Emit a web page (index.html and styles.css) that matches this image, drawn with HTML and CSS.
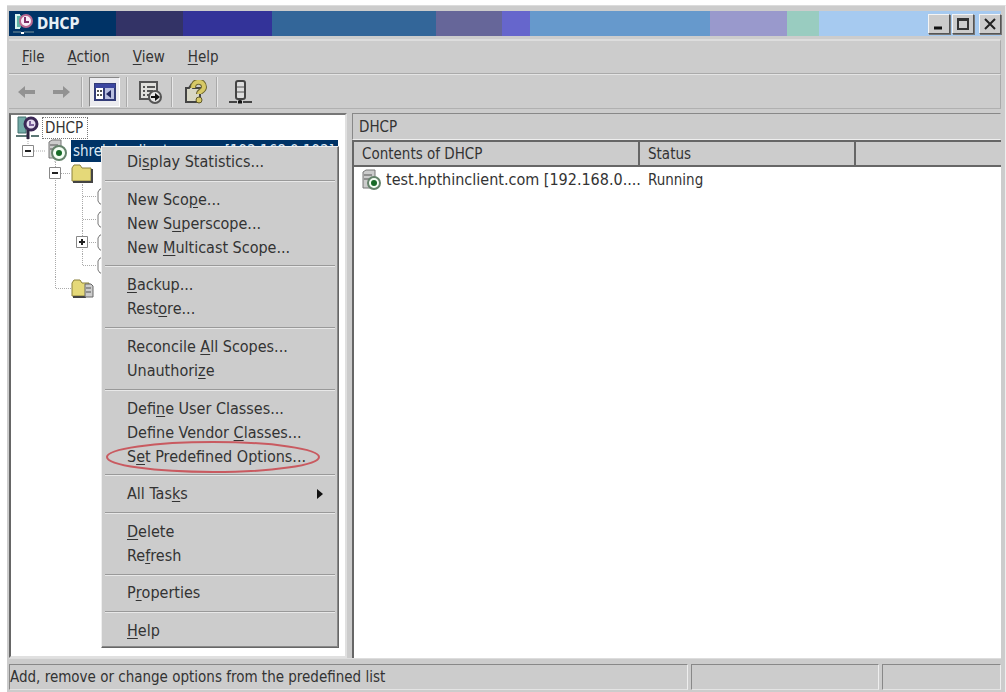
FILE: index.html
```html
<!DOCTYPE html>
<html lang="en">
<head>
<meta charset="utf-8">
<title>DHCP</title>
<link rel="stylesheet" href="styles.css">
</head>
<body>
<div class="window">
  <header class="titlebar">
    <svg class="title-icon" width="24" height="24" viewBox="0 0 24 24" aria-hidden="true"><path d="M4 3h6v13H4z" fill="#5fb5a8"/><path d="M4 3h5M4 16h5M5 3v13" stroke="#d8f4ee" stroke-width="2"/><circle cx="15" cy="9" r="6" fill="#f8eef8" stroke="#b86890" stroke-width="2"/><path d="M14 5v5h4" fill="none" stroke="#803068" stroke-width="2"/><path d="M2 20h8M13 20h10" stroke="#79939a" stroke-width="1"/><path d="M10 21h3" stroke="#fff" stroke-width="2"/></svg>
    <h1 class="title">DHCP</h1>
    <div class="controls">
      <button class="control" aria-label="Minimize"><svg width="14" height="14" viewBox="0 0 14 14"><path d="M2 11h8" stroke="#111" stroke-width="3"/></svg></button>
      <button class="control" aria-label="Maximize"><svg width="14" height="14" viewBox="0 0 14 14"><path d="M2 2h10v10H2zM1 3h12" fill="none" stroke="#333" stroke-width="2"/></svg></button>
      <button class="control close" aria-label="Close"><svg width="14" height="14" viewBox="0 0 14 14"><path d="M2 2l10 10M12 2L2 12" stroke="#222" stroke-width="2"/></svg></button>
    </div>
  </header>
  <nav class="menubar" aria-label="Main menu">
    <button class="menu-title"><u>F</u>ile</button>
    <button class="menu-title"><u>A</u>ction</button>
    <button class="menu-title"><u>V</u>iew</button>
    <button class="menu-title"><u>H</u>elp</button>
  </nav>
  <div class="toolbar" role="toolbar" aria-label="Tools">
    <button class="tool nav" aria-label="Back"><svg width="20" height="20" viewBox="0 0 20 20"><path d="M1 10l7-6v4h10v4H8v4z" fill="#929292"/></svg></button>
    <button class="tool nav" aria-label="Forward"><svg width="20" height="20" viewBox="0 0 20 20"><path d="M19 10l-7-6v4H2v4h10v4z" fill="#929292"/></svg></button>
    <span class="divider"></span>
    <button class="tool pressed" aria-label="Show console tree"><svg width="22" height="20" viewBox="0 0 22 20"><path d="M1 2h20v16H1z" fill="#fff" stroke="#333c78" stroke-width="2"/><path d="M1 4h20" stroke="#3b46a0" stroke-width="4"/><path d="M11 6h9v11h-9z" fill="#b9bfe0"/><path d="M10 6v12" stroke="#333c78" stroke-width="2"/><path d="M3 9h2m1 0h2M3 13h2m1 0h2" stroke="#555" stroke-width="2"/><path d="M17 8v8l-5-4z" fill="#202660"/></svg></button>
    <span class="divider"></span>
    <button class="tool" aria-label="Export list"><svg width="24" height="24" viewBox="0 0 24 24"><path d="M2 2h17v17H2z" fill="#e0e0dc" stroke="#555" stroke-width="2"/><path d="M5 7h2m2 0h8M5 11h2m2 0h6M5 15h2m2 0h3" stroke="#555" stroke-width="2"/><circle cx="17" cy="17" r="6" fill="#e6e6e6" stroke="#555" stroke-width="2"/><path d="M13 16h4v-3l5 4-5 4v-3h-4z" fill="#111"/></svg></button>
    <span class="divider"></span>
    <button class="tool" aria-label="Help"><svg width="24" height="24" viewBox="0 0 24 24"><path d="M3 8h3l2-3 2 3h7v14H3z" fill="#d8d7c5" stroke="#444" stroke-width="2"/><path d="M10 8c0-8 11-8 11-1 0 4-5 4-5 7" fill="none" stroke="#6d6630" stroke-width="6"/><path d="M10 8c0-8 11-8 11-1 0 4-5 4-5 7" fill="none" stroke="#d7c966" stroke-width="4"/><circle cx="16" cy="20" r="3" fill="#d7c966" stroke="#5f5928"/></svg></button>
    <span class="divider"></span>
    <button class="tool" aria-label="Server"><svg width="26" height="26" viewBox="0 0 26 26"><rect x="9" y="2" width="9" height="18" rx="2" fill="#ddd" stroke="#444" stroke-width="2"/><path d="M10 8h7M10 13h7" stroke="#555" stroke-width="1"/><path d="M13 20v3M2 23h8M16 23h9" stroke="#444" stroke-width="2"/><path d="M11 23h4" stroke="#111" stroke-width="3"/></svg></button>
  </div>
  <main class="panes">
    <section class="tree" aria-label="Console tree">
      <div class="node"><svg width="31" height="23" viewBox="11 0 31 23"><path d="M18 1h8v16h-8z" fill="#72a9a6" stroke="#42706f"/><path d="M16 20h11M31 20h8" stroke="#5c7775" stroke-width="2"/><circle cx="31" cy="8" r="6" fill="#e5dcf0" stroke="#3b2856" stroke-width="3"/><path d="M30 5v4h4" fill="none" stroke="#7c629c" stroke-width="2"/><path d="M28 14v9" stroke="#2d2340" stroke-width="3"/></svg><span class="label focused">DHCP</span></div>
      <div class="node"><svg width="60" height="23" viewBox="11 0 60 23"><path d="M28 0v7M34 12h12M55 0v23" stroke="#aaa" stroke-dasharray="1 1"/><path d="M22.500 6.500h11v11h-11z" fill="#fff" stroke="#888"/><path d="M25 12h6" stroke="#222" stroke-width="2"/><path d="M49 3l3-2h9v15l-3 3h-9z" fill="#ccc" stroke="#777"/><path d="M50 6h8M50 10h8" stroke="#555"/><circle cx="59" cy="14" r="7" fill="#f5fff5" stroke="#65836b" stroke-width="2"/><circle cx="59" cy="14" r="3" fill="#176b27"/></svg><span class="label selected"><span>shrek.hpclient.com</span><span>[192.168.0.192]</span></span></div>
      <div class="node"><svg width="84" height="23" viewBox="11 0 84 23"><path d="M55.500 0v23M61 11.500h10M82.500 20v3" stroke="#aaa" stroke-dasharray="1 1"/><path d="M49.500 5.500h11v11h-11z" fill="#fff" stroke="#888"/><path d="M52 11h6" stroke="#222" stroke-width="2"/><path d="M72 6l2-3h6l2 3h9v13H72z" fill="#e5d979" stroke="#8b813c"/><path d="M73 20h19V7" fill="none" stroke="#444" stroke-width="2"/></svg></div>
      <div class="node"><svg width="94" height="23" viewBox="11 0 94 23"><path d="M55.500 0v23M82.500 0v23M83 11.500h14" stroke="#aaa" stroke-dasharray="1 1"/><path d="M102 4h-2l-2 3v9l2 3h2" fill="none" stroke="#777"/></svg></div>
      <div class="node"><svg width="94" height="23" viewBox="11 0 94 23"><path d="M55.500 0v23M82.500 0v23M83 11.500h14" stroke="#aaa" stroke-dasharray="1 1"/><path d="M102 4h-2l-2 3v9l2 3h2" fill="none" stroke="#777"/></svg></div>
      <div class="node"><svg width="94" height="23" viewBox="11 0 94 23"><path d="M55.500 0v23M82.500 0v23M83 11.500h14" stroke="#aaa" stroke-dasharray="1 1"/><path d="M76.500 5.500h11v11h-11z" fill="#fff" stroke="#888"/><path d="M79 11h6M82 8v6" stroke="#222" stroke-width="2"/><path d="M102 4h-2l-2 3v9l2 3h2" fill="none" stroke="#777"/></svg></div>
      <div class="node"><svg width="94" height="23" viewBox="11 0 94 23"><path d="M55.500 0v23M82.500 0v12M83 11.500h14" stroke="#aaa" stroke-dasharray="1 1"/><path d="M102 4h-2l-2 3v9l2 3h2" fill="none" stroke="#777"/></svg></div>
      <div class="node"><svg width="84" height="23" viewBox="11 0 84 23"><path d="M55.500 0v12M56 11.500h15" stroke="#aaa" stroke-dasharray="1 1"/><path d="M72 6l2-3h6l2 3h7v13H72z" fill="#e5d979" stroke="#8b813c"/><path d="M73 20h13" stroke="#444" stroke-width="2"/><path d="M85 7h6l2 2v11h-8z" fill="#ccc" stroke="#666"/><path d="M86 11h5M86 15h5" stroke="#555"/></svg></div>
    </section>
    <section class="details" aria-label="Details">
      <h2 class="details-title">DHCP</h2>
      <div class="list">
        <table class="grid">
          <colgroup><col class="col-name"><col class="col-status"><col></colgroup>
          <thead><tr><th>Contents of DHCP</th><th>Status</th><th></th></tr></thead>
          <tbody><tr><td><div class="server"><svg width="20" height="22" viewBox="0 0 20 22"><path d="M1 3l3-2h9v15l-3 3H1z" fill="#ccc" stroke="#777"/><path d="M2 6h8M2 10h8" stroke="#555"/><circle cx="12" cy="14" r="6" fill="#f5fff5" stroke="#65836b" stroke-width="2"/><circle cx="12" cy="14" r="3" fill="#176b27"/></svg>test.hpthinclient.com [192.168.0....</div></td><td>Running</td><td></td></tr></tbody>
        </table>
      </div>
    </section>
  </main>
  <footer class="statusbar"><span class="status-text">Add, remove or change options from the predefined list</span><span class="status-mid"></span><span class="status-end"></span></footer>

  <div class="context-menu" role="menu">
    <button class="item" role="menuitem">Di<u>s</u>play Statistics...</button>
    <hr class="separator">
    <button class="item" role="menuitem">New Sco<u>p</u>e...</button>
    <button class="item" role="menuitem">New S<u>u</u>perscope...</button>
    <button class="item" role="menuitem">New <u>M</u>ulticast Scope...</button>
    <hr class="separator">
    <button class="item" role="menuitem"><u>B</u>ackup...</button>
    <button class="item" role="menuitem">Rest<u>o</u>re...</button>
    <hr class="separator">
    <button class="item" role="menuitem">Reconcile <u>A</u>ll Scopes...</button>
    <button class="item" role="menuitem">Unauthori<u>z</u>e</button>
    <hr class="separator">
    <button class="item" role="menuitem">Defi<u>n</u>e User Classes...</button>
    <button class="item" role="menuitem">Define Vendor <u>C</u>lasses...</button>
    <button class="item" role="menuitem">S<u>e</u>t Predefined Options...<svg class="ring" width="216" height="34" viewBox="0 0 216 34" aria-hidden="true"><ellipse cx="108" cy="17" rx="106" ry="15" fill="none" stroke="#c95a60" stroke-width="2"/></svg></button>
    <hr class="separator">
    <button class="item" role="menuitem">All Tas<u>k</u>s<svg class="arrow" width="6" height="10" viewBox="0 0 6 10"><path d="M0 0l6 5-6 5z" fill="#111"/></svg></button>
    <hr class="separator">
    <button class="item" role="menuitem"><u>D</u>elete</button>
    <button class="item" role="menuitem">Re<u>f</u>resh</button>
    <hr class="separator">
    <button class="item" role="menuitem">P<u>r</u>operties</button>
    <hr class="separator">
    <button class="item" role="menuitem"><u>H</u>elp</button>
  </div>
</div>
</body>
</html>
```
FILE: styles.css
```css
* { box-sizing: border-box; }
body { margin: 0; background: #fff; color: #333; font: 15px/20px "DejaVu Sans Condensed", "DejaVu Sans", sans-serif; }
button { font: inherit; color: inherit; border: 0; background: none; padding: 0; }
h1, h2 { margin: 0; font-size: 15px; }
svg { display: block; flex: none; }
u { text-underline-offset: 2px; }

.window { position: relative; display: flex; flex-direction: column; min-height: calc(100vh - 5px); margin: 5px 0 0 7px; padding: 5px 4px 0 2px; background: #ccc; border-top: 1px solid #dcdcdc; border-right: 1px solid #eee; }
.titlebar { display: flex; align-items: center; height: 25px; background: linear-gradient(90deg, #003366 107px, #333366 107px 174px, #333399 174px 263px, #336699 263px 427px, #666699 427px 493px, #6666cc 493px 521px, #6699cc 521px 701px, #9999cc 701px 778px, #99ccc0 778px 810px, #a6caf0 810px); }
.title-icon { margin: 0 2px; }
.title { color: #e8f0f6; font-size: 15px; }
.controls { display: flex; margin-left: auto; }
.control { display: grid; place-items: center; width: 22px; height: 20px; background: #ccc; border: 1px solid; border-color: #f4f4f4 #555 #555 #f4f4f4; box-shadow: 1px 1px 0 #777; }
.control + .control { margin-left: 2px; }
.control.close { margin-left: 5px; }

.menubar { display: flex; align-items: center; gap: 23px; height: 35px; margin-top: 3px; padding: 0 13px; border-top: 2px solid #ddd; border-right: 1px solid #aaa; border-bottom: 1px solid #aaa; }
.toolbar { display: flex; align-items: center; gap: 6px; height: 35px; padding: 0 4px; border-top: 1px solid #e4e4e4; border-right: 1px solid #aaa; border-bottom: 1px solid #b0b0b0; }
.tool { display: grid; place-items: center; width: 31px; height: 30px; }
.tool.nav { width: 28px; }
.pressed { background: #ececf0; border: 1px solid; border-color: #888 #fff #fff #888; }
.divider { width: 2px; height: 30px; border-left: 1px solid #aaa; border-right: 1px solid #e8e8e8; }

.panes { display: flex; flex: 1; gap: 5px; margin-top: 4px; }
.tree { width: 338px; padding-top: 1px; background: #fff; border: 2px solid; border-color: #777 #e0e0e0 #e0e0e0 #666; }
.node { display: flex; align-items: center; height: 23px; }
.label { height: 22px; padding: 0 4px 0 2px; white-space: nowrap; }
.focused { border: 1px dotted #777; }
.selected { display: flex; flex: 1; align-items: center; justify-content: space-between; margin-right: 7px; background: #003366; color: #dce8f4; }
.details { display: flex; flex: 1; flex-direction: column; min-width: 0; }
.details-title { height: 27px; padding: 3px 6px; font-weight: 400; border: 1px solid; border-color: #888 #ccc #eee #888; }
.list { flex: 1; background: #fff; border: 2px solid #666; border-width: 2px 0 0 2px; }
.grid { width: 100%; table-layout: fixed; border-collapse: separate; border-spacing: 0; }
.col-name { width: 286px; }
.col-status { width: 216px; }
.grid th { height: 25px; padding: 0 8px; text-align: left; font-weight: 400; background: #ccc; border-right: 2px solid #666; border-bottom: 2px solid #666; }
.grid th:last-child { border-right: 0; }
.grid td { height: 26px; padding: 0 8px; white-space: nowrap; }
.server { display: flex; align-items: center; gap: 4px; font-size: 16px; }

.statusbar { display: flex; gap: 3px; height: 34px; padding: 5px 0 2px; border-top: 1px solid #ddd; }
.statusbar span { border: 1px solid; border-color: #888 #eee #e4e4e4 #888; }
.status-text { flex: 1; padding-top: 2px; white-space: nowrap; }
.status-mid { width: 188px; }
.status-end { width: 119px; }

.context-menu { position: absolute; left: 94px; top: 140px; display: flex; flex-direction: column; width: 238px; height: 502px; padding: 3px 3px 4px; background: #ccc; border: 1px solid; border-color: #eee #666 #666 #eee; box-shadow: inset -1px -1px 0 #888; font-size: 16px; }
.item { position: relative; display: flex; flex: none; align-items: center; height: 24px; padding: 0 12px 0 22px; text-align: left; white-space: pre; }
.separator { width: 100%; height: 2px; margin: auto 0; border: 0; border-top: 1px solid #999; border-bottom: 1px solid #e8e8e8; }
.arrow { margin-left: auto; }
.ring { position: absolute; left: 0; top: -5px; }
```
